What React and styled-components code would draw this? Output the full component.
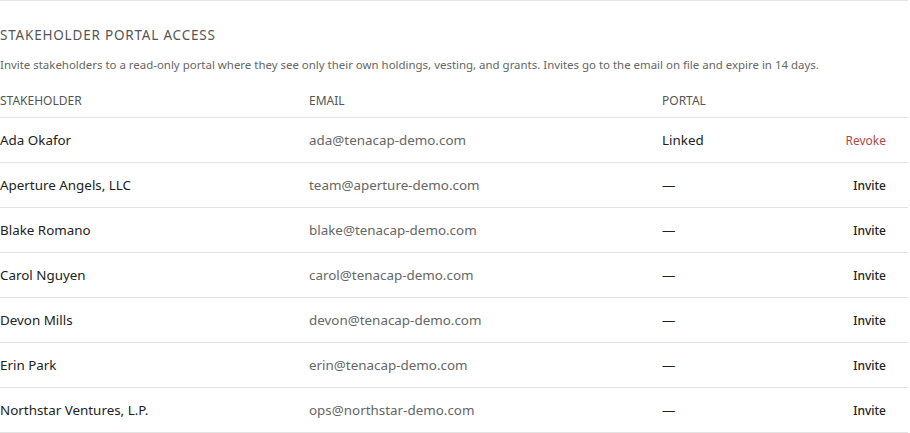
import React from 'react';
import styled, { createGlobalStyle } from "styled-components";

const GlobalStyle = createGlobalStyle`
    body {
        margin: 0;
        background: #fff;
        font-family: "Noto Sans", "Open Sans", sans-serif;
    }
`;

const stakeholders = [
    { id: 1, name: "Ada Okafor", email: "ada@tenacap-demo.com", linked: true },
    { id: 2, name: "Aperture Angels, LLC", email: "team@aperture-demo.com", linked: false },
    { id: 3, name: "Blake Romano", email: "blake@tenacap-demo.com", linked: false },
    { id: 4, name: "Carol Nguyen", email: "carol@tenacap-demo.com", linked: false },
    { id: 5, name: "Devon Mills", email: "devon@tenacap-demo.com", linked: false },
    { id: 6, name: "Erin Park", email: "erin@tenacap-demo.com", linked: false },
    { id: 7, name: "Northstar Ventures, L.P.", email: "ops@northstar-demo.com", linked: false },
];

function App() {
    const renderRows = () => {
        return stakeholders.map((s) => (
            <Row key={s.id}>
                <Name>{s.name}</Name>
                <Email>{s.email}</Email>
                <Portal>{s.linked ? "Linked" : "—"}</Portal>
                <ActionCell>
                    <ActionButton $danger={s.linked}>{s.linked ? "Revoke" : "Invite"}</ActionButton>
                </ActionCell>
            </Row>
        ));
    };

    return (
        <Section>
            <GlobalStyle />
            <Title>Stakeholder Portal Access</Title>
            <Description>
                Invite stakeholders to a read-only portal where they see only their own holdings, vesting, and grants. Invites go to the email on file and expire in 14 days.
            </Description>
            <Table>
                <HeadRow>
                    <HeadCell>Stakeholder</HeadCell>
                    <HeadCell>Email</HeadCell>
                    <HeadCell>Portal</HeadCell>
                    <HeadCell />
                </HeadRow>
                {renderRows()}
            </Table>
        </Section>
    );
}
export default App;

const Section = styled.section`
    width: 908px;
    border-top: 1px solid #e6e6e6;
    padding-top: 25px;
`;
const Title = styled.h2`
    margin: 0;
    font-size: 13.5px;
    font-weight: 400;
    letter-spacing: 0.8px;
    text-transform: uppercase;
    color: #555;
    line-height: 18px;
`;
const Description = styled.p`
    margin: 13px 0 0;
    font-size: 11.45px;
    color: #666;
    line-height: 16px;
`;
const Table = styled.div`
    margin-top: 20px;
    display: flex;
    flex-direction: column;
`;
const gridCols = `309px 353px 1fr 120px`;
const HeadRow = styled.div`
    display: grid;
    grid-template-columns: ${gridCols};
    align-items: center;
    padding-bottom: 8px;
    border-bottom: 1px solid #e3e3e3;
`;
const HeadCell = styled.div`
    font-size: 12px;
    text-transform: uppercase;
    color: #555;
    line-height: 16px;
`;
const Row = styled.div`
    display: grid;
    grid-template-columns: ${gridCols};
    align-items: center;
    height: 44px;
    border-bottom: 1px solid #e3e3e3;
`;
const Name = styled.div`
    font-size: 13.4px;
    color: #222;
`;
const Email = styled.div`
    font-size: 13.4px;
    color: #666;
`;
const Portal = styled.div`
    font-size: 13.4px;
    color: #222;
`;
const ActionCell = styled.div`
    display: flex;
    justify-content: flex-end;
    padding-right: 22px;
`;
const ActionButton = styled.button`
    border: none;
    background: none;
    padding: 0;
    font-family: inherit;
    font-size: 12px;
    font-weight: ${(p) => (p.$danger ? 400 : 500)};
    color: ${(p) => (p.$danger ? "#b04a42" : "#222")};
    cursor: pointer;
`;
